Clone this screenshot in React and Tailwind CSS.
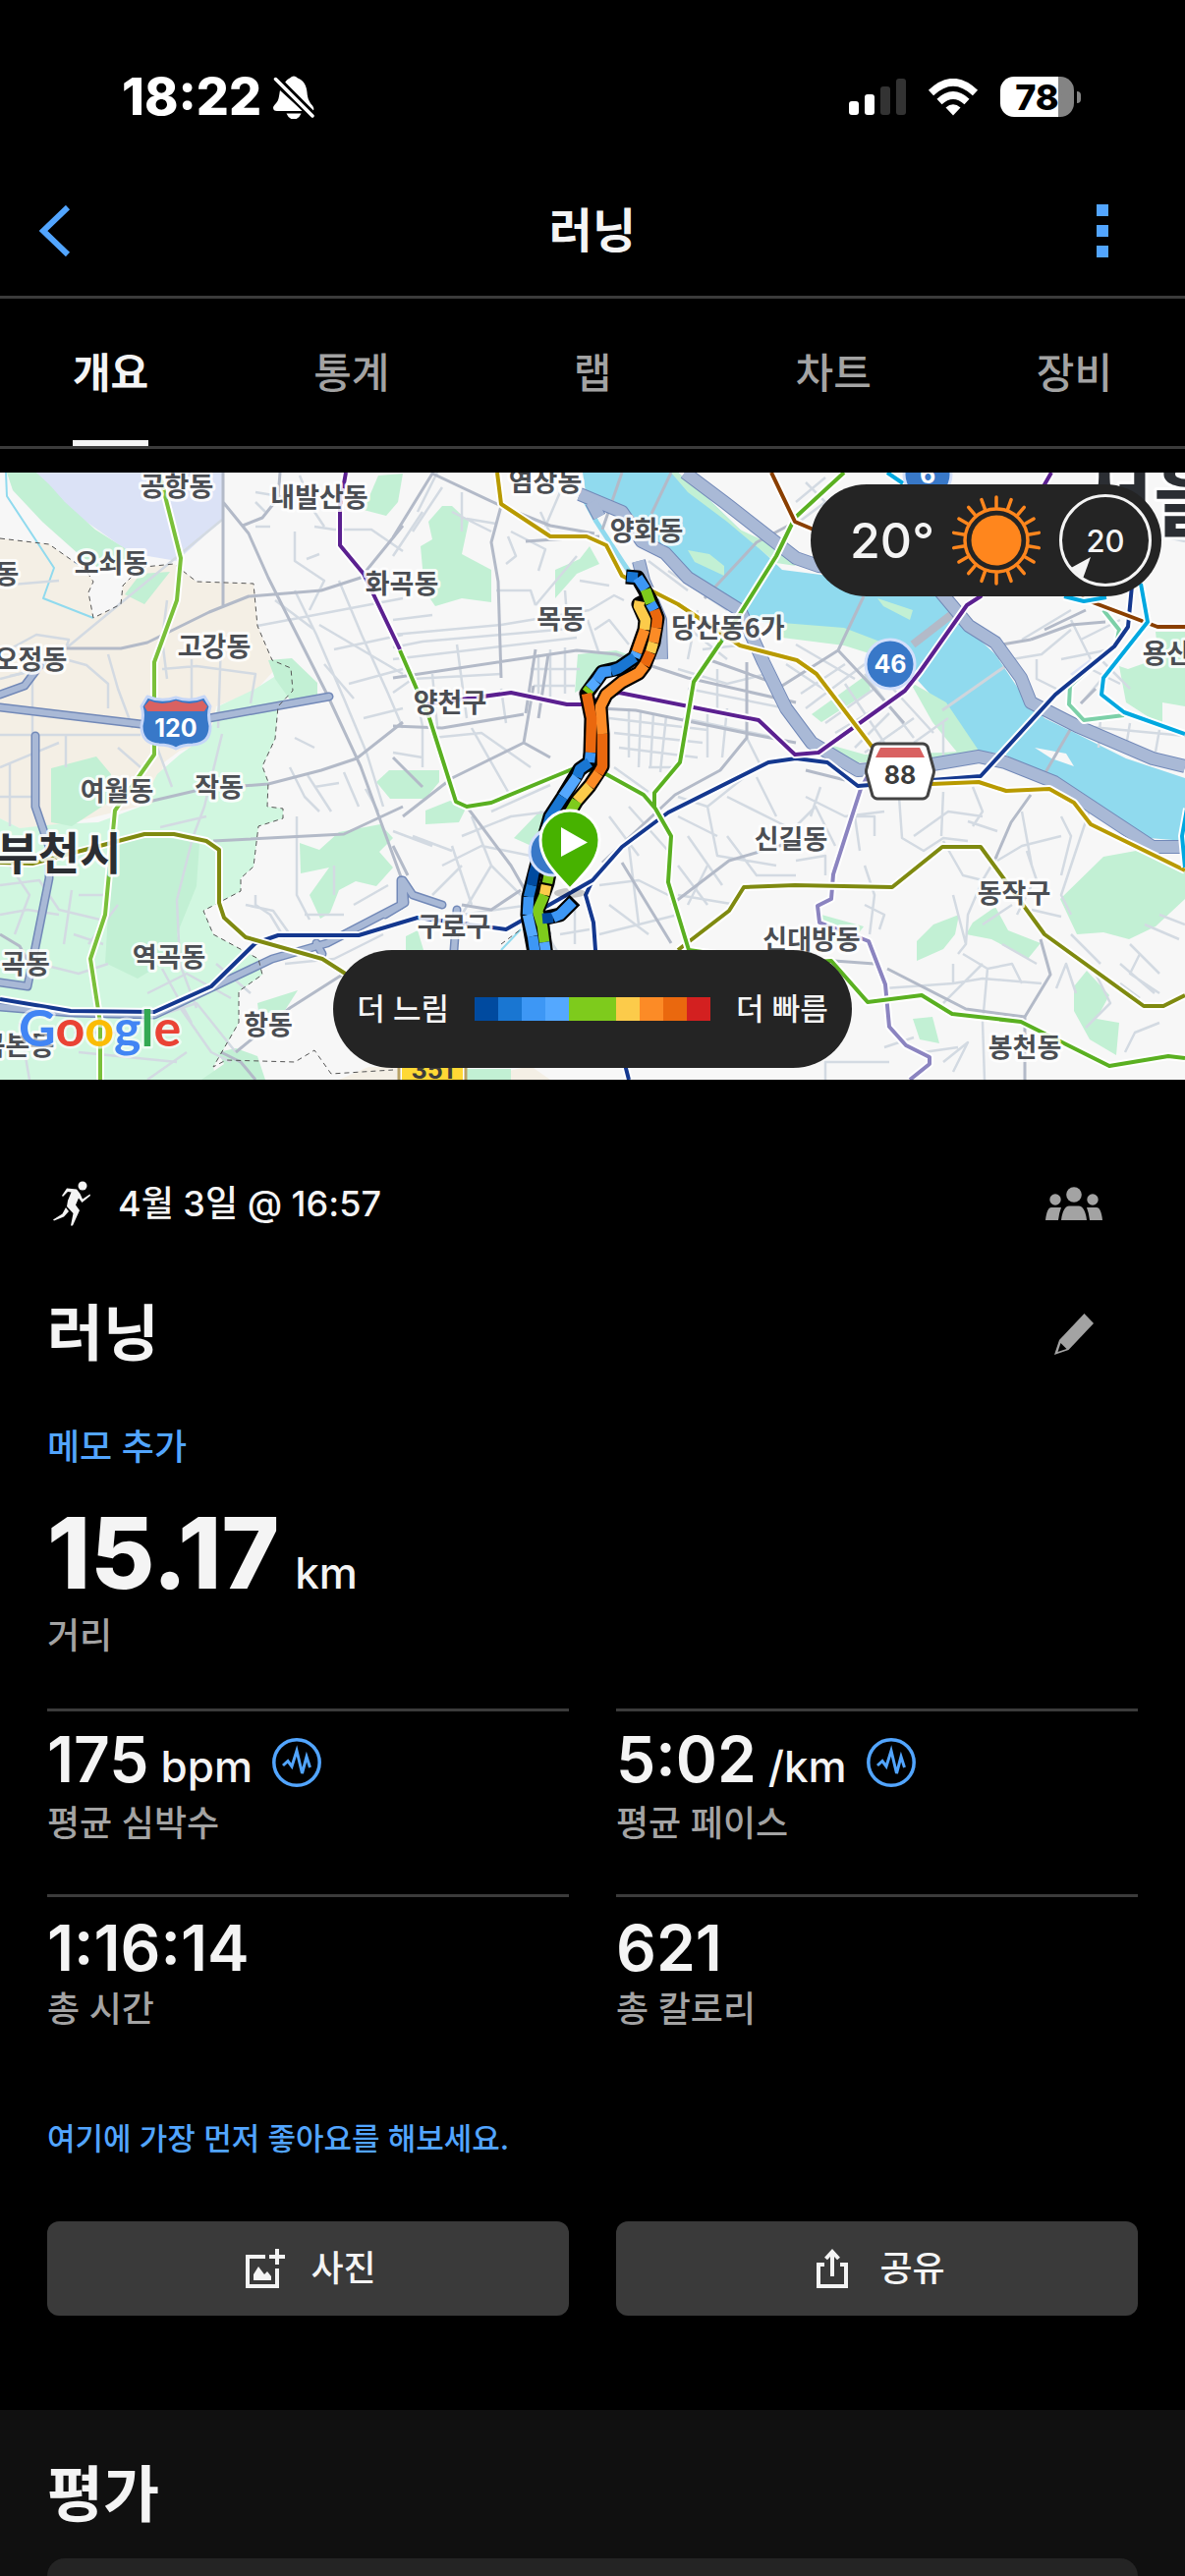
import { useState } from "react"

const tabs = ['개요', '통계', '랩', '차트', '장비']

const legend = ['#004a9f', '#1976d2', '#3d97f5', '#54a8ff', '#7ecb1c', '#7ecb1c', '#fccb4a', '#fc8b26', '#ea680e', '#d32020']

const stats = [
    { value: '175', unit: 'bpm', label: '평균 심박수', chart: true },
    { value: '5:02', unit: '/km', label: '평균 페이스', chart: true },
    { value: '1:16:14', label: '총 시간' },
    { value: '621', label: '총 칼로리' }
]

const parks = [
    'M7 0H37L50 12 66 30 97 58 130 79 127 93 103 99 80 83 43 50 13 18Z',
    'M52 301L98 289 113 307 110 336 73 360 52 356Z',
    'M115 381L147 368 203 377 200 421 180 470 187 495 160 503 140 515 107 499 110 450Z',
    'M273 191L297 189 323 214 323 234 297 234 280 210Z',
    'M127 124L143 103 173 101 147 134Z',
    'M305 377L325 384 345 366 387 358 400 372 386 386 400 402 383 421 362 416 345 425 336 448 326 454 315 430 335 402 306 408Z',
    'M383 315L396 303H412V332H397Z',
    'M370 38L385 3 410 1 405 30 393 44Z',
    'M262 540L303 527 287 552 263 548Z',
    'M228 602L222 590 240 586 262 594 270 618H205Z',
    'M428 75L440 68 436 50 450 34 460 34 477 50 470 83 500 99 500 132 470 128 443 136 432 120Z',
    'M565 99L590 88 600 75 610 93 587 103 565 128Z',
    'M588 185L627 181 650 189 640 201 613 209 585 224Z',
    'M400 303H447V315L433 332H400Z',
    'M433 344L458 334 475 340 467 356 433 358Z',
    'M523 372L550 344 560 348 543 381Z',
    'M413 472L425 466 431 486H413Z',
    'M926 213L963 234 996 283 976 287 949 254Z',
    'M796 153L859 158 919 181 926 197 859 176 796 168Z',
    'M826 246L883 205 886 222 836 254Z',
    'M830 273L880 287 960 285 990 283 960 295H870Z',
    'M1079 434L1123 391 1156 385 1206 405V434L1176 462 1149 475 1123 468 1096 470Z',
    'M1139 197L1148 200 1179 189 1176 162H1206V238L1183 234V258L1146 234Z',
    'M933 477L950 460 976 450 972 470 960 485 933 497Z',
    'M983 470L990 458 1013 442 1026 466 1059 479 1046 495 1009 475Z',
    'M1093 523L1106 507 1129 532 1116 556 1139 560 1136 593 1109 577 1093 548Z',
    'M929 556L949 554 956 581 936 577Z',
    'M836 450L879 462 863 483 836 475Z',
    'M400 3L408 10 405 20H400Z',
    'M690 0L720 26 753 58 783 72 810 95 790 92 740 50 700 20 683 0Z',
    'M470 607H520V618H470Z'
]

// thin residential streets
const streets = [
    'M0 115L60 110M13 178L37 165 70 170 67 179M0 210L40 200 66 190 88 196 110 215V240M110 185L120 220 135 260M67 179L147 113 226 48',
    'M0 267H143M33 266V202L10 207M67 267V300M0 300L60 275M10 297V360M0 330H36M195 190V236M225 170L222 260M165 200L200 197 260 205 255 235M170 130L165 170 170 210',
    'M226 266L208 340 196 372 180 435 183 500 200 545M160 280L175 320M120 280L143 300M163 361L210 350M0 420L40 415 60 445 102 455M0 450L28 445 60 450M10 400L30 430 15 470M73 425L65 480M75 470L105 480M80 430H105M120 440L90 480M40 500L80 510 110 500',
    'M220 500L255 530M150 530L190 510 235 535M140 560L200 540 240 590M165 505L195 560M180 540L215 590 235 600M75 570H140M80 590L180 600M20 560L30 618M150 618L190 590',
    'M260 20L290 25M260 55H275M300 60V90L330 110 315 140M325 83L312 88M320 55L340 58H378L410 80M305 3L320 40 330 55M260 30L270 40',
    'M262 156L410 128M300 120L322 165 350 230 373 285 390 340M345 110L368 165 395 225 410 260M325 155L410 205M340 180L410 165M355 215L410 200M370 250L410 240M330 195L360 230M280 130L320 160',
    'M295 300L310 330 325 345M320 320L345 316M313 308L337 345M350 305L365 340M372 322L385 345M300 270L320 280M302 350V430L315 455M260 430V440L275 450 290 475M340 400V430M360 440L395 420M310 450H350M290 500L340 495 390 470M250 440L278 446 295 470',
    'M400 85L430 40M420 60L450 15M445 0L425 40M470 20V60M500 60L460 40M475 47L505 52M520 60L555 78 548 100M570 20L555 55M517 65L525 85 515 93M550 40L560 62M505 120H540L545 135M545 135L587 85M400 150L440 145',
    'M400 165L510 155 600 140M400 190L587 168M400 178L430 172 590 158M400 224L420 210 510 205M420 210L430 258M440 205L445 258M465 175L475 250M480 260L520 330M440 270L490 265 540 300M510 220L515 255M430 260V300M400 285L430 290',
    'M540 200H590M543 217H585M548 185V225M560 180V228M575 178V225M575 120L578 160M600 140L625 125 635 130M590 110L620 115M605 160L620 150 640 175M598 150L610 185',
    'M500 345L560 318M470 370L520 350 560 345M450 400L490 380 540 390M440 430L470 400M460 380L480 440M480 350L500 400 530 430M500 400L470 450M420 370L460 385M400 365L440 380M470 450L540 440M550 460L575 500M585 440V480M570 470L600 465',
    'M620 250L720 262M625 265L715 275M630 280L710 290M640 240V290M652 242L650 300M665 245L662 300M678 248L672 305M700 220L800 240M695 250L790 270M720 240V290M740 240L735 290M760 270L775 300M625 300L660 325M660 300L690 300',
    'M690 200L740 215 780 205M700 190L710 140M690 150L740 190M715 180L760 175M680 100L740 140M660 90L700 120M730 200V240M690 330L720 340 770 300M690 350L730 370M700 370L735 420M720 340L730 390 790 400M740 330L800 360M770 310L790 350M690 400L720 440M740 370L770 410H810',
    'M620 350L650 390M640 340L680 385M610 420L650 415 680 430M620 440L660 470M610 470L690 450M690 430L750 440M720 400L700 440M640 380L650 460',
    'M800 195L860 235M810 175L870 210M820 240L880 195M815 225L860 195M840 255L890 220M850 265L900 235M870 280L905 245M880 285L930 250M860 215L900 275M880 205L930 270M895 205L950 265M930 275L965 250M960 255V290',
    'M820 330L860 350 900 345M825 350L835 320M800 370L830 340 850 380M810 395L840 390V410M870 350L875 385M860 350H890V370M915 330L918 372 940 385 960 372 985 375M930 370L965 345 1000 350M960 325L958 370M990 320L1000 345 990 360M985 355L1015 365M960 375L980 410 1000 415 1015 390',
    'M1015 395L1040 380 1060 375 1080 370M1040 345L1050 400M1080 350L1090 370 1080 410M1110 340L1080 430 1090 450M970 430L983 480 975 490M1000 415L985 450 983 480M1030 440L1000 460M1050 420L1035 450M1045 385L1055 415M1050 445L1080 452',
    'M970 520L1000 515 1060 520M980 490L1005 505 1000 560M1005 505L1030 500 1040 520M970 500V520L900 525M960 540L1000 500M1020 480L1055 500M1000 560L1002 618M940 590L975 585M960 600L985 580 970 610M900 585L930 575M905 600L840 600 840 618',
    'M1075 525L1085 500 1095 530M1110 500L1130 540 1105 565M1140 500L1175 530M1150 480L1180 510M1140 520L1160 535M1160 490L1150 510 1180 530M1165 460L1200 475M1180 450L1206 460M1145 590L1155 570 1180 560M1090 470L1120 500M880 440L900 450 895 465M880 400L890 430 885 470',
    'M1040 170L1090 140M1030 190L1060 185 1090 160M1055 190V210L1075 220M1090 150L1110 190M1100 170L1140 150M1080 190L1130 180M1130 200L1100 235M1110 200L1140 215M1120 190L1150 220M1100 258L1206 268M1120 250L1118 280M1150 255L1145 285M1180 262L1175 290M1160 60L1206 70',
    'M870 30L830 90M820 10L840 30 800 60M810 30L840 5M860 20L880 40'
]

// wider grey roads
const roads = [
    'M227 0V136M227 30L253 62 273 107 333 226 367 299 410 417M67 179H123L150 173 213 142 253 126 327 120 367 107 410 54M147 336L207 322 273 317 327 303 363 291 410 254M217 375L350 368 410 340M247 54L267 46 283 26 285 0',
    'M400 66L440 1 510 34 500 71 507 111 510 209M400 258L450 260 533 246M610 240L647 242 763 266 810 275M543 217L533 275 460 311 410 350M400 209L587 181 627 185 700 209 810 234M533 275L560 290M613 397L687 328 733 303 760 270V193M633 397L683 479M683 440L742 395 810 375',
    'M545 180L535 245M558 185L548 250M510 34L560 54 605 62M613 58L633 0M663 42L683 0M717 128L770 71 810 50M796 217L853 181 879 126M920 255L885 215 853 181M1063 307L1089 262M1013 393L1029 356 1049 328M903 505L983 546 1043 554 1069 511 1059 475M1043 554V618M849 497L890 500',
    'M535 70L610 65M430 320L400 290M475 340L520 400 560 470M470 440L500 445 530 425M820 303L860 313M1049 170L1090 155 1125 152M1100 235L1115 220M400 380L415 410M225 590L245 600 260 618M240 590L295 545 350 510M0 470L20 482 30 500M1105 140L1063 160M720 190L790 215',
    'M1049 170L1020 175'
]

const highways = [
    'M0 239L143 256 213 250 335 228',
    'M36 268V340L50 381V413L28 523 0 519',
    'M0 226L25 217 43 193',
    'M0 544L73 550 157 552 277 495 333 479 408 440V415',
    'M322 479L328 490',
    'M392 450L412 438 410 415 420 430 450 440M465 445L462 486'
]

const expressways = [
    'M590 22L633 40 653 70 677 82 700 107 753 140 777 193 800 240 826 275 873 303 949 297 996 289 1023 295 1073 315 1129 352 1173 381H1206',
    'M650 90L655 110 672 150 673 190',
    'M697 0L737 30 783 66 810 87 833 95 905 103 956 120 986 156 1013 173 1039 209 1049 234 1096 258 1173 291 1206 299',
    'M602 30L610 45'
]

const metro = [
    { color: '#7cd0a8', d: 'M1123 140L1139 160 1136 175 1089 217 1088 236 1103 252 1144 247' },
    { color: '#8b84c0', d: 'M883 309L876 322 848 409 846 434 832 441 834 458 884 477 901 521 905 564 922 583 946 595V602L926 618' },
    { color: '#7ac03a', d: 'M162 0L184 87 180 130 157 193V287L117 344 107 450 92 495 102 560V618' },
    { color: '#14388f', d: 'M603 415L596 430 604 458 606 486 640 618' },
    { color: '#14388f', d: 'M0 536L72 548 157 549 215 523 260 479 283 471H365L425 453 515 465 603 415 633 381 680 346 782 295 810 291 842 295 873 319 998 309 1074 226 1134 177 1148 157 1152 115V80' },
    { color: '#7f8a10', d: 'M0 397L33 398 147 368H177L210 375 223 384V438L228 453 250 473 328 495 353 511M690 486L742 446 757 422 809 420 908 422 959 381H998L1063 470 1164 543H1184L1206 532' },
    { color: '#5b2090', d: 'M352 0L346 34V74L370 103 407 180M433 236L520 224 577 236H593L630 224 772 252 809 287 833 285 921 222 936 203 984 135 998 126 1070 0' },
    { color: '#5ab021', d: 'M407 181L437 250 464 335 475 340 500 336 587 300 617 307 655 328 667 342 683 370 680 417 701 486 800 500 846 497 883 539 938 532 969 551 1039 559 1129 604 1189 594 1206 596M666 340V326L692 295 706 213 753 144 790 85 809 46 859 0' },
    { color: '#b89a00', d: 'M506 0L510 32 560 65H597L617 74 633 105 690 134 753 176 811 191 831 205 889 281 910 310 948 317 996 315 1024 324 1068 322 1093 336 1110 358 1206 405' },
    { color: '#8a3f00', d: 'M785 0L809 50 828 58 1096 126 1178 157H1206' },
    { color: '#00a8e0', d: 'M903 0L919 11M1083 126L1103 131 1126 127M1161 113L1168 152 1123 209 1121 226 1144 244 1206 266M1208 342L1203 370 1206 402' }
]

const trackOutline = [
    'M637 106L649 107 662 130 669 148 665 173 656 196 650 204 633 213 617 226 611 238 613 266V299L600 319 587 334 567 368 557 418 547 446 552 462 557 500',
    'M662 128L650 134 657 150 656 160 646 188 630 199 613 203 597 225 602 250 601 285 600 295 590 302 573 330 560 350 550 385 541 420 538 432 537 450 546 500',
    'M552 454L570 450 585 435'
]

// [pace color, segment]
const track = [
    ['#1976d2', 'M638 106L649 107'],
    ['#3d97f5', 'M649 107L657 119'],
    ['#7ecb1c', 'M657 119L662 133'],
    ['#3d97f5', 'M662 133L666 140'],
    ['#ea680e', 'M666 140L669 148 668 158'],
    ['#fc8b26', 'M668 158L665 173'],
    ['#fccb4a', 'M665 173L662 183'],
    ['#ea680e', 'M662 183L656 196'],
    ['#fc8b26', 'M656 196L650 204 633 213 617 226 611 238 613 266'],
    ['#ea680e', 'M613 266V299L609 306'],
    ['#fc8b26', 'M609 306L600 319'],
    ['#fccb4a', 'M600 319L587 334'],
    ['#7ecb1c', 'M587 334L567 368 557 418'],
    ['#fccb4a', 'M556 420L554 430'],
    ['#7ecb1c', 'M554 430L547 446 552 462 554 478'],
    ['#54a8ff', 'M554 478L557 500'],
    ['#fccb4a', 'M651 131L650 136 657 150 656 160'],
    ['#fc8b26', 'M656 160L648 183'],
    ['#54a8ff', 'M648 183L646 188'],
    ['#1976d2', 'M646 188L630 199 622 202'],
    ['#3d97f5', 'M622 202L613 203 607 212'],
    ['#54a8ff', 'M607 212L600 220'],
    ['#7ecb1c', 'M600 220L597 224'],
    ['#ea680e', 'M597 225L602 250 601 285'],
    ['#3d97f5', 'M601 285L600 295'],
    ['#1976d2', 'M600 295L590 302 587 310'],
    ['#54a8ff', 'M587 310L573 330'],
    ['#1976d2', 'M573 330L560 350 550 385'],
    ['#004a9f', 'M550 385L543 409 541 420'],
    ['#1976d2', 'M541 420L538 432'],
    ['#3d97f5', 'M538 432L537 450'],
    ['#54a8ff', 'M537 450L542 472'],
    ['#3d97f5', 'M542 472L546 500'],
    ['#004a9f', 'M552 454L563 453'],
    ['#3d97f5', 'M563 453L570 450 583 437']
]

const labels = [
    ['공항동', 180, 14], ['내발산동', 325, 25], ['오쇠동', 113, 92], ['동', 7, 103], ['화곡동', 409, 113],
    ['고강동', 218, 177], ['오정동', 31, 190], ['여월동', 119, 324], ['작동', 223, 320], ['곡동', 26, 500],
    ['역곡동', 172, 493], ['항동', 273, 562], ['곡본동', 18, 583], ['염장동', 555, 9], ['양화동', 658, 59],
    ['목동', 571, 149], ['당산동6가', 741, 158], ['양천구', 458, 234], ['구로구', 462, 462], ['신길동', 805, 373],
    ['신대방동', 826, 475], ['동작구', 1032, 428], ['봉천동', 1043, 585], ['용산동', 1200, 184]
]

const BellOff = () => (
    <svg viewBox="0 0 42 44" className="w-[42px] h-11" fill="#fff">
        <path d="M12 7C14 4 16 3 17 2.500Q21-1.500 25 2.500C31 5 34 10 34.500 17C35 24 37 27 40 30.500Q42 33 41 35.500Z" />
        <path d="M7 15L30 36H4Q0 36 0 32.500Q0 31 3 28C6 25 6 20 7 15Z" />
        <path d="M13.500 38.500H28.500Q26 44.500 21 44.500Q16 44.500 13.500 38.500Z" />
        <path d="M3 3L40 41" stroke="#000" strokeWidth="8" />
        <path d="M2.500 3.500L40 41" stroke="#fff" strokeWidth="3.500" strokeLinecap="round" />
    </svg>
)

const Wifi = () => (
    <svg viewBox="0 0 52 38" className="w-[52px] h-[38px]" fill="none" stroke="#fff" strokeWidth="7.500">
        <path d="M3.500 14.500Q26-7 48.500 14.500" />
        <path d="M12 23.500Q26 10.500 40 23.500" />
        <path d="M18.500 29.500Q26 23 33.500 29.500L26 37.500Z" fill="#fff" stroke="none" />
    </svg>
)

const StatusBar = () => (
    <div className="flex items-center justify-between h-[169px] pt-7 pl-[124px] pr-[106px]">
        <div className="flex items-center gap-3">
            <span className="text-[52px] leading-none font-extrabold text-white">18:22</span>
            <BellOff />
        </div>
        <div className="flex items-center">
            <div className="flex items-end gap-1.5 h-[37px]">
                <span className="w-2.5 h-3.5 rounded-[3px] bg-white" />
                <span className="w-2.5 h-[21px] rounded-[3px] bg-white" />
                <span className="w-2.5 h-[29px] rounded-[3px] bg-[#333]" />
                <span className="w-2.5 h-[37px] rounded-[3px] bg-[#333]" />
            </div>
            <div className="ml-[22px]"><Wifi /></div>
            <div className="ml-[22px] flex items-center justify-center w-[75px] h-[41px] rounded-[14px] bg-linear-to-r from-white from-79% to-[#848484] to-79%">
                <span className="text-[36px] leading-none font-extrabold text-black">78</span>
            </div>
            <span className="ml-[3px] w-1 h-3 rounded-r-full bg-[#848484]" />
        </div>
    </div>
)

const Runner = () => (
    <svg viewBox="0 0 38 46" className="w-[38px] h-[46px]" fill="#f4f4f4">
        <circle cx="30" cy="5" r="4.500" />
        <path d="M14 7.500L24 8.500 27.500 13 30 18.500 37.500 13.500 38 15 29.500 22 26 17.500 23 24.500 27 30 20 45.500H18L20.500 33 14 26 15 20 18.500 11.500 15 11 10 16 9 15Z" />
        <path d="M13 27L16 31 11 36.500 1 40.500 0 39.500 9.500 33.500Z" />
    </svg>
)

const People = () => (
    <svg viewBox="0 0 58 36" className="w-[58px] h-9" fill="#a3a3a3">
        <circle cx="29" cy="9" r="7.800" />
        <circle cx="10" cy="14" r="5.700" />
        <circle cx="48" cy="14" r="5.700" />
        <path d="M16 35C17 26 20 20.500 24 20.500H34C38 20.500 41 26 42 35Z" />
        <path d="M0 35C1 26 3 22 6 22H16Q14 27 13 35ZM58 35C57 26 55 22 52 22H42Q44 27 45 35Z" />
    </svg>
)

const Pencil = () => (
    <svg viewBox="0 0 40 42" className="w-10 h-[42px]" fill="#a3a3a3">
        <path d="M30.500 0L40 10 14.500 37 0 42 5 27Z" />
        <path d="M6.500 30L12.500 36 3.500 39Z" fill="#000" />
    </svg>
)

const PulseIcon = () => (
    <svg viewBox="0 0 50 50" className="w-[50px] h-[50px]" fill="none" stroke="#52a5ff">
        <circle cx="25" cy="25" r="23.200" strokeWidth="3.500" />
        <path d="M11 28L16 23.500 20 29 25 13 30.500 36 35 19 38.500 30" strokeWidth="3" />
    </svg>
)

const PhotoIcon = () => (
    <svg viewBox="0 0 48 48" className="w-12 h-12" fill="none" stroke="#f4f4f4" strokeWidth="4">
        <path d="M26 12H8V42H38V24M38 4V20M30 12H46" />
        <path d="M14 36V30L19 22 25 30 28 27 32 32V36Z" fill="#f4f4f4" stroke="none" />
    </svg>
)

const ShareIcon = () => (
    <svg viewBox="0 0 48 48" className="w-12 h-12" fill="none" stroke="#f4f4f4" strokeWidth="4">
        <path d="M16 20H10V42H38V20H32M24 32V7M17.500 14L24 7 30.500 14" />
    </svg>
)

const Sun = () => (
    <svg viewBox="0 0 94 94" className="w-[94px] h-[94px]" fill="none" stroke="#ff861d" strokeWidth="3.500" strokeLinecap="round">
        <circle cx="47" cy="47" r="25.500" fill="#ff861d" stroke="none" />
        <circle cx="47" cy="47" r="32" />
        {Array.from({ length: 18 }, (_, i) => (
            <path key={i} d="M47 13V3" transform={`rotate(${i * 20} 47 47)`} />
        ))}
    </svg>
)

const Map = () => (
    <svg viewBox="0 0 1206 618" className="block w-full" role="img" aria-label="러닝 경로 지도" strokeLinejoin="round">
        <rect width="1206" height="618" fill="#f7f7f7" />
        <path fill="#f4efe5" d="M0 67L50 73 87 99 95 111 90 122 95 148 123 134 125 115 133 107 147 96 177 93 200 111 258 113 262 156 277 191 283 197 260 222 220 238 213 275 183 283 167 295 157 336 57 360 20 362 0 352Z" />
        <path fill="#f4efe5" d="M345 618L375 605H410V618ZM505 612L540 604 560 618H505Z" />
        <path fill="#d1f7e0" d="M0 352L20 362 57 358 100 356 143 340 160 307 183 287 213 266 222 238 260 220 290 201 298 222 283 238 280 271 267 299 273 315 272 340 288 342V352L263 360 258 401 245 413V426L207 446 217 470 263 495 267 511 243 528V560L217 605 220 618H0Z" />
        <path fill="#dbe2f6" d="M37 0H226V48L180 90 133 82 95 55 62 32 45 10Z" />
        <path fill="#90daee" d="M593 0H690L720 26 753 58 796 99 859 107 956 126 986 160 1013 185 1043 230 1063 250 1096 266 1146 291 1206 311V375L1169 372 1129 348 1096 323 1063 311 1023 287 993 283 969 250 939 217 906 181 859 160 796 156 753 148 720 124 683 87 657 58 627 42 597 26Z" />
        {parks.map(d => <path key={d} d={d} fill="#c2f0d4" />)}
        <path fill="#c2f0d4" d="M700 79L722 83 737 95V105L707 91ZM893 128L929 140 926 150 899 136Z" />
        <path fill="#dbe2f6" d="M1089 205L1109 190 1112 198 1093 208Z" />
        <path fill="#f7f7f7" d="M1053 280L1085 286 1093 299 1070 291Z" />
        <g fill="none">
            <path stroke="#90daee" strokeWidth="5" d="M592 22L607 50 633 90 645 108" />
            <path stroke="#90daee" strokeWidth="2" d="M6 0L7 24 55 97 44 128 95 148M510 486L530 465" />
            {streets.map(d => <path key={d} d={d} stroke="#d3dae2" strokeWidth="2.500" />)}
            {roads.map(d => <path key={d} d={d} stroke="#b3bac8" strokeWidth="3" />)}
            <path d="M929 175L969 144" stroke="#b3bac8" strokeWidth="8" />
            <path d="M959 242L1029 193" stroke="#cfd5dc" strokeWidth="3" />
            {highways.map(d => <path key={d} d={d} stroke="#7289b8" strokeWidth="9" strokeLinecap="round" />)}
            {highways.map(d => <path key={d} d={d} stroke="#a9b9d6" strokeWidth="6" strokeLinecap="round" />)}
            {expressways.map(d => <path key={d} d={d} stroke="#7289b8" strokeWidth="14" />)}
            {expressways.map(d => <path key={d} d={d} stroke="#a9b9d6" strokeWidth="12" />)}
            <path stroke="#555" strokeDasharray="5 4" d="M0 67L50 73 87 99 95 111 90 122 95 148 123 134 125 115 133 107 147 96 177 93 200 111 258 113 262 156 277 191 296 199 298 222 283 238 280 271 267 299 273 315 272 340 288 342V352L263 360 258 401 245 413V426L207 446 217 470 263 495 267 511 243 528V560L217 605 230 598 300 600 320 588 337 612 400 608M510 480L530 465" />
            {metro.map(({ color, d }) => (
                <g key={d}>
                    <path d={d} stroke="#fff" strokeWidth="8" />
                    <path d={d} stroke={color} strokeWidth="4" />
                </g>
            ))}
        </g>

        {/* road shields */}
        <g fontWeight="700" textAnchor="middle">
            <path d="M150 228Q164 234 179 229Q194 234 208 228L214 238Q211 246 214 258Q214 276 196 277Q186 277 179 281Q172 277 162 277Q144 276 144 258Q147 246 144 238Z" fill="#3878c8" stroke="#c5d6f7" strokeWidth="3" />
            <path d="M152 232Q165 238 179 232Q193 238 206 232L211 238 208 243H150L147 238Z" fill="#d96161" />
            <text x="179" y="269" fontSize="25" fill="#fff">120</text>
            <circle cx="906" cy="195" r="25" fill="#3878c8" stroke="#d3e0fb" strokeWidth="3" />
            <text x="906" y="204" fontSize="25" fill="#fff">46</text>
            <circle cx="944" cy="2" r="24" fill="#3878c8" stroke="#d3e0fb" strokeWidth="3" />
            <text x="944" y="11" fontSize="25" fill="#fff">6</text>
            <path d="M893 276H939Q942 276 944 279L950 301Q951 304 950 307L944 329Q942 332 939 332H893Q890 332 888 329L882 307Q881 304 882 301L888 279Q890 276 893 276Z" fill="#fff" stroke="#444" strokeWidth="3" />
            <path d="M896 280H936L941 290H891Z" fill="#d96161" />
            <text x="916" y="317" fontSize="25" fill="#3c3c3c">88</text>
            <rect x="406" y="588" width="68" height="34" fill="#fff" stroke="#b8a265" strokeWidth="3" />
            <rect x="409" y="590" width="62" height="30" fill="#ffd835" />
            <text x="440" y="617" fontSize="25" fill="#3c3c3c">351</text>
        </g>

        <g fontFamily='"Noto Sans CJK KR", sans-serif' fontWeight="700" textAnchor="middle" paintOrder="stroke" stroke="#fff" strokeOpacity=".85" strokeWidth="6">
            <g fontSize="27" fill="#4b4e53">
                {labels.map(([name, x, y]) => <text key={name} x={x} y={y + 10}>{name}</text>)}
            </g>
            <text x="60" y="404" fontSize="46" fill="#2b2e33">부천시</text>
            <text x="1174" y="58" fontSize="84" fill="#2b2e33">서울</text>
        </g>

        <g fill="none">
            {trackOutline.map(d => <path key={d} d={d} stroke="#000" strokeWidth="15" />)}
            {track.map(([color, d]) => <path key={d} d={d} stroke={color} strokeWidth="10.500" />)}
        </g>

        <circle cx="563" cy="386" r="24" fill="#3878c8" stroke="#d3e0fb" strokeWidth="3" />
        <ellipse cx="580" cy="428" rx="16" ry="5" fill="#000" opacity=".2" />
        <path d="M580 424C568 410 550 396 550 374A30 30 0 0 1 610 374C610 396 592 410 580 424Z" fill="#47b200" stroke="#fff" strokeWidth="3" />
        <path d="M571 361L598 376.500 571 391Z" fill="#fff" />

        <text x="19" y="584" fontSize="52" fontFamily="Lato, sans-serif" fontWeight="700" paintOrder="stroke" stroke="#fff" strokeOpacity=".6" strokeWidth="5">
            <tspan fill="#4285f4">G</tspan><tspan fill="#ea4335">o</tspan><tspan fill="#fbbc05">o</tspan><tspan fill="#4285f4">g</tspan><tspan fill="#34a853">l</tspan><tspan fill="#ea4335">e</tspan>
        </text>
    </svg>
)

const App = () => {
    const [tab, setTab] = useState(tabs[0])

    return (
        <div lang="ko" className="min-h-screen bg-black text-[#f4f4f4] font-[Inter,'Noto_Sans_CJK_KR',sans-serif] overflow-hidden">
            <StatusBar />

            <header className="flex items-center h-[135px] px-9 border-b-3 border-[#3b3b3b]">
                <div className="flex-1">
                    <button aria-label="뒤로" className="w-12 h-[60px] flex items-center">
                        <svg viewBox="0 0 36 52" className="w-9 h-[52px]" fill="none" stroke="#52a5ff" strokeWidth="6">
                            <path d="M33 2L8 26 33 50" />
                        </svg>
                    </button>
                </div>
                <h1 className="text-[48px] leading-none font-semibold">러닝</h1>
                <div className="flex-1 flex justify-end">
                    <button aria-label="더 보기" className="w-12 h-[60px] mr-6 flex flex-col items-center justify-center gap-[9px]">
                        <span className="w-3 h-3 bg-[#52a5ff]" />
                        <span className="w-3 h-3 bg-[#52a5ff]" />
                        <span className="w-3 h-3 bg-[#52a5ff]" />
                    </button>
                </div>
            </header>

            <nav className="border-b-3 border-[#3b3b3b]">
                <div role="tablist" className="grid grid-cols-5 -mx-2.5 h-[150px]">
                    {tabs.map(name => (
                        <button key={name} role="tab" aria-selected={tab === name} onClick={() => setTab(name)} className="flex justify-center">
                            <span className={`flex items-center h-full text-[42px] border-y-6 border-t-transparent ${tab === name ? 'font-semibold border-b-[#f4f4f4]' : 'font-medium border-b-transparent text-[#a3a3a3]'}`}>{name}</span>
                        </button>
                    ))}
                </div>
            </nav>

            <div className="relative mt-6">
                <Map />
                <div className="absolute top-3 right-6 flex items-center h-[114px] pl-10 pr-2.5 rounded-full bg-[#242424]">
                    <span className="text-[50px] leading-none font-medium">20°</span>
                    <div className="ml-4"><Sun /></div>
                    <div className="relative ml-[17px] flex items-center justify-center w-[94px] h-[94px] rounded-full border-3 border-[#f4f4f4]">
                        <span className="text-[31px] leading-none font-medium">20</span>
                        <svg viewBox="0 0 20 22" className="absolute left-[9px] bottom-[5px] w-5 h-[22px]" fill="#f4f4f4">
                            <path d="M20 0L12 22 0 11Z" />
                        </svg>
                    </div>
                </div>
                <div className="absolute inset-x-0 bottom-3 flex justify-center">
                    <div className="flex items-center gap-[26px] h-[120px] px-6 rounded-full bg-[#242424] text-[31px] font-medium">
                        <span>더 느림</span>
                        <div className="flex">
                            {legend.map((color, i) => <span key={i} className="w-6 h-6" style={{ background: color }} />)}
                        </div>
                        <span>더 빠름</span>
                    </div>
                </div>
            </div>

            <main className="px-12 pt-[102px] pb-24">
                <div className="flex items-center h-12">
                    <div className="w-[72px] pl-1.5"><Runner /></div>
                    <span className="text-[36px] font-medium">4월 3일 @ 16:57</span>
                    <button aria-label="공개 범위" className="ml-auto mr-9"><People /></button>
                </div>

                <div className="flex items-center mt-[73px] h-18">
                    <h2 className="text-[62px] leading-none font-semibold">러닝</h2>
                    <button aria-label="이름 수정" className="ml-auto mr-[45px]"><Pencil /></button>
                </div>

                <button className="block mt-[55px] h-12 text-[36px] leading-[48px] font-medium text-[#52a5ff]">메모 추가</button>

                <p className="mt-9 h-24 leading-[96px]">
                    <span className="text-[100px] font-extrabold">15.17</span>
                    <span className="ml-4 text-[44px] font-medium">km</span>
                </p>
                <p className="mt-3 text-[36px] leading-[48px] font-medium text-[#a3a3a3]">거리</p>

                <div className="grid grid-cols-2 gap-x-12 mt-[50px]">
                    {stats.map(({ value, unit, label, chart }) => (
                        <div key={label} className="border-t-3 border-[#3b3b3b] pt-5 pb-12">
                            <div className="flex items-center h-16 gap-5">
                                <p className="text-[64px] leading-[64px] font-semibold">
                                    {value}
                                    {unit && <span className="ml-3 text-[44px] font-medium">{unit}</span>}
                                </p>
                                {chart && <button aria-label={`${label} 차트`}><PulseIcon /></button>}
                            </div>
                            <p className="mt-1.5 text-[36px] leading-[48px] font-medium text-[#a3a3a3]">{label}</p>
                        </div>
                    ))}
                </div>

                <button className="block mt-9 text-[31px] leading-[48px] font-medium text-[#52a5ff]">여기에 가장 먼저 좋아요를 해보세요.</button>

                <div className="grid grid-cols-2 gap-12 mt-15">
                    <button className="flex items-center justify-center gap-6 h-24 rounded-xl bg-[#3a3a3a] text-[36px] font-medium"><PhotoIcon />사진</button>
                    <button className="flex items-center justify-center gap-6 h-24 rounded-xl bg-[#3a3a3a] text-[36px] font-medium"><ShareIcon />공유</button>
                </div>
            </main>

            <section className="px-12 pt-[51px] bg-[#101010]">
                <h2 className="text-[62px] leading-[72px] font-semibold">평가</h2>
                <div className="mt-7 h-[18px] rounded-t-3xl bg-[#242424]" />
            </section>
        </div>
    )
}

export default App
